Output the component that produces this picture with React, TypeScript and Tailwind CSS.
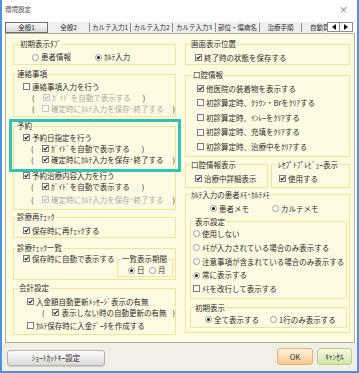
import React from 'react';

type Kids = { children?: React.ReactNode };

function Box({ on, dim }: { on?: boolean; dim?: boolean }) {
  return (
    <span
      className={`flex items-center justify-center w-[7px] h-[7px] shrink-0 border bg-white ${
        dim ? 'border-[#c6c6c6]' : 'border-[#7d7d7d]'
      }`}
    >
      {on && (
        <svg viewBox="0 0 5 5" className="w-[5px] h-[5px]">
          <path d="M0.6 2.4 L2 3.9 L4.5 0.9" fill="none" stroke={dim ? '#b4b4b4' : '#1c1c1c'} strokeWidth="1.1" />
        </svg>
      )}
    </span>
  );
}

function Dot({ on }: { on?: boolean }) {
  return (
    <span className="flex items-center justify-center w-[7px] h-[7px] shrink-0 rounded-full border border-[#9c9c9c] bg-white">
      {on && <span className="w-[3px] h-[3px] rounded-full bg-[#1c1c1c]" />}
    </span>
  );
}

function Group({
  title,
  lg = 'ml-[2px]',
  className = '',
  inner = '',
  children,
}: Kids & { title: string; lg?: string; className?: string; inner?: string }) {
  return (
    <fieldset className={`min-w-0 border border-[#f3e597] ${className}`}>
      <legend className={`px-[1px] text-[7.5px] leading-[10px] ${lg}`}>{title}</legend>
      <div className={inner}>{children}</div>
    </fieldset>
  );
}

function Chk({ on, dim, label, h = 'h-[11px]', className = '' }: { on?: boolean; dim?: boolean; label: string; h?: string; className?: string }) {
  return (
    <div className={`flex items-center gap-[2px] ${h} ${dim ? 'text-[#a8a8a8]' : ''} ${className}`}>
      <Box on={on} dim={dim} />
      <span className="whitespace-nowrap">{label}</span>
    </div>
  );
}

function Sub({ on, dim, label, gap = 'ml-[10px]', className = '' }: { on?: boolean; dim?: boolean; label: string; gap?: string; className?: string }) {
  return (
    <div className={`flex items-center h-[11px] ${className}`}>
      <span className="w-[11px]">(</span>
      <Box on={on} dim={dim} />
      <span className={`ml-[2px] whitespace-nowrap ${dim ? 'text-[#a8a8a8]' : ''}`}>{label}</span>
      <span className={gap}>)</span>
    </div>
  );
}

function Opt({ on, label, h = 'h-[10px]', w = '' }: { on?: boolean; label: string; h?: string; w?: string }) {
  return (
    <div className={`flex items-center gap-[2px] ${h}`}>
      <Dot on={on} />
      <span className={`whitespace-nowrap ${w}`}>{label}</span>
    </div>
  );
}

const tabs = [
  { t: '全般2', w: 'w-[42px]' },
  { t: 'カルテ入力1', w: 'w-[41px]' },
  { t: 'カルテ入力2', w: 'w-[42px]' },
  { t: 'カルテ入力3', w: 'w-[43px]' },
  { t: '部位・傷病名', w: 'w-[44px]' },
  { t: '治療手順', w: 'w-[42px]' },
];

export default function App() {
  return (
    <div className="w-[359px] h-[373px] flex flex-col overflow-hidden border-x-2 border-b-2 border-[#4f93de] bg-white text-[#2b2b2b] text-[7.5px] leading-none font-['Noto_Sans_CJK_JP','Noto_Sans',sans-serif]">
      {/* title bar */}
      <div className="h-[18px] shrink-0 flex items-center justify-between pl-[3px] pr-[9px] text-[6.5px] text-[#444]">
        <span>環境設定</span>
        <span className="text-[9px] text-[#666]">×</span>
      </div>

      {/* tabs */}
      <div className="h-[15px] shrink-0 flex items-end pl-[3px] pr-[2px]">
        <div className="flex-1 flex h-[11px] overflow-hidden bg-[#efefef] text-[6.5px]">
          <div className="w-[43px] shrink-0 flex items-center justify-center border border-[#6d6d6d] bg-linear-to-b from-[#fbfbfb] to-[#d9d9d9]">全般1</div>
          {tabs.map((tab) => (
            <div key={tab.t} className={`${tab.w} shrink-0 flex items-center justify-center border-r border-[#8c8c8c] my-[1px]`}>
              {tab.t}
            </div>
          ))}
          <div className="w-[42px] shrink-0 flex items-center pl-[8px] whitespace-nowrap">自動算定</div>
        </div>
        <div className="flex h-[10px] mb-[1px] mr-[2px]">
          <span className="w-[13px] flex items-center justify-center border border-[#8c8c8c] bg-white">
            <svg viewBox="0 0 4 6" className="w-[4px] h-[6px]"><path d="M4 0 L0 3 L4 6Z" fill="#111" /></svg>
          </span>
          <span className="w-[13px] flex items-center justify-center border border-l-0 border-[#8c8c8c] bg-white">
            <svg viewBox="0 0 4 6" className="w-[4px] h-[6px]"><path d="M0 0 L4 3 L0 6Z" fill="#111" /></svg>
          </span>
        </div>
      </div>

      {/* main panel */}
      <div className="ml-[3px] w-[350px] shrink-0 flex items-start gap-[9px] border border-[#b6b09a] bg-[#fffbe2] pt-[5px] pl-[7px] pb-[7px]">
        {/* left column */}
        <div className="relative w-[163px] flex flex-col">
          <Group title="初期表示ﾀﾌﾞ" lg="ml-[5px]" inner="pt-[3px] pb-[2px] pl-[18px]">
            <div className="flex items-center h-[10px]">
              <Opt label="患者情報" w="w-[54px]" />
              <Opt on label="ｶﾙﾃ入力" />
            </div>
          </Group>

          <Group title="連絡事項" className="mt-[4px]" inner="pt-[2px] pb-[2px] pl-[9px]">
            <Chk label="連絡事項入力を行う" />
            <Sub on dim label="ｶﾞｲﾄﾞを自動で表示する" gap="ml-[12px]" className="ml-[9px]" />
            <Sub dim label="確定時にｶﾙﾃ入力を保存･終了する" gap="ml-[9px]" className="ml-[9px]" />
          </Group>

          <Group title="予約" className="mt-[4px]" inner="pt-[1px] pb-[4px] pl-[9px]">
            <Chk on label="予約日指定を行う" />
            <Sub on label="ｶﾞｲﾄﾞを自動で表示する" gap="ml-[12px]" className="ml-[8px]" />
            <Sub on label="確定時にｶﾙﾃ入力を保存･終了する" gap="ml-[9px]" className="ml-[8px]" />
            <Chk on label="予約治療内容入力を行う" className="mt-[5px]" />
            <Sub on label="ｶﾞｲﾄﾞを自動で表示する" gap="ml-[12px]" className="ml-[8px]" />
            <Sub on dim label="確定時にｶﾙﾃ入力を保存･終了する" gap="ml-[9px]" className="ml-[8px] mt-[2px]" />
          </Group>

          <Group title="診療再ﾁｪｯｸ" className="mt-[2px]" inner="pt-[3px] pb-[1px] pl-[9px]">
            <Chk on label="保存時に再ﾁｪｯｸする" />
          </Group>

          <Group title="診療ﾁｪｯｸ一覧" className="mt-[5px]" inner="pb-[2px] pl-[9px] pr-[2px] flex items-start justify-between">
            <Chk on label="保存時に自動で表示する" />
            <Group title="一覧表示期間" lg="ml-[3px]" className="w-[56px] mt-[1px]" inner="pt-[1px] pb-[1px] pl-[10px] flex items-center">
              <Opt on label="日" w="w-[12px]" />
              <Opt label="月" />
            </Group>
          </Group>

          <Group title="会計設定" lg="ml-[4px]" className="mt-[3px]" inner="pt-[3px] pb-[3px] pl-[13px]">
            <Chk on label="入金額自動更新ﾒｯｾｰｼﾞ表示の有無" />
            <Sub on label="表示しない時の自動更新の有無" gap="ml-[6px]" className="ml-[15px]" />
            <Chk label="ｶﾙﾃ保存時に入金ﾃﾞｰﾀを作成する" className="mt-[2px]" />
          </Group>

          {/* highlight frame */}
          <div className="absolute top-[80px] -left-[4px] w-[172px] h-[53px] border-[3px] border-[#31c2b5] pointer-events-none" />
        </div>

        {/* right column */}
        <div className="w-[165px] flex flex-col">
          <Group title="画面表示位置" lg="ml-[4px]" inner="pt-[3px] pb-[1px] pl-[9px]">
            <Chk on label="終了時の状態を保存する" />
          </Group>

          <Group title="口腔情報" lg="ml-[6px]" className="mt-[5px]" inner="pt-[1px] pb-[2px] pl-[11px]">
            <Chk on h="h-[14.6px]" label="他医院の装着物を表示する" />
            <Chk h="h-[14.6px]" label="初診算定時、ｸﾗｳﾝ・Brをｸﾘｱする" />
            <Chk h="h-[14.6px]" label="初診算定時、ｲﾝﾚｰをｸﾘｱする" />
            <Chk h="h-[14.6px]" label="初診算定時、充填をｸﾘｱする" />
            <Chk h="h-[14.6px]" label="初診算定時、治療中をｸﾘｱする" />
          </Group>

          <div className="flex gap-[3px] mt-[3px]">
            <Group title="口腔情報表示" lg="ml-[4px]" className="w-[83px]" inner="pt-[3px] pb-[3px] pl-[9px]">
              <Chk on label="治療中詳細表示" />
            </Group>
            <Group title="ﾚｾﾌﾟﾄﾌﾟﾚﾋﾞｭｰ表示" lg="ml-[5px]" className="w-[79px]" inner="pt-[3px] pb-[3px] pl-[7px]">
              <Chk on label="使用する" />
            </Group>
          </div>

          <Group title="ｶﾙﾃ入力の患者ﾒﾓ･ｶﾙﾃﾒﾓ" lg="ml-[4px]" className="mt-[2px]" inner="pt-[4px] pb-[4px] pl-[4px] pr-[2px]">
            <div className="flex items-center h-[10px] pl-[20px]">
              <Opt on label="患者メモ" w="w-[53px]" />
              <Opt label="カルテメモ" />
            </div>
            <Group title="表示設定" lg="ml-[3px]" className="mt-[3px]" inner="pb-[2px] pl-[2px]">
              <Opt h="h-[13.75px]" label="使用しない" />
              <Opt h="h-[13.75px]" label="ﾒﾓが入力されている場合のみ表示する" />
              <Opt h="h-[13.75px]" label="注意事項が含まれている場合のみ表示する" />
              <Opt on h="h-[13.75px]" label="常に表示する" />
              <Chk h="h-[13.75px]" label="ﾒﾓを改行して表示する" />
            </Group>
            <Group title="初期表示" lg="ml-[3px]" className="mt-[4px]" inner="pt-[2px] pb-[2px] pl-[14px]">
              <div className="flex items-center h-[10px]">
                <Opt on label="全て表示する" w="w-[56px]" />
                <Opt label="1行のみ表示する" />
              </div>
            </Group>
          </Group>
        </div>
      </div>

      {/* bottom buttons */}
      <div className="flex-1 flex items-start justify-between bg-[#f1efe8] pl-[5px] pr-[5px]">
        <button className="mt-[7px] w-[98px] h-[16px] rounded-[3px] border border-[#b3b3b3] bg-linear-to-b from-[#fdfdfd] to-[#d8d8d8] text-[7.5px] text-[#333] shadow-[0_1px_1px_rgba(0,0,0,0.15)]">
          ｼｮｰﾄｶｯﾄｷｰ設定
        </button>
        <div className="mt-[5px] flex gap-[4px]">
          <button className="w-[36px] h-[17px] rounded-[3px] border border-[#e2b577] bg-linear-to-b from-[#fff3df] to-[#f7c68c] text-[7.5px] text-[#333]">
            OK
          </button>
          <button className="w-[35px] h-[17px] rounded-[3px] border border-[#b9d08c] bg-linear-to-b from-[#f5fae6] to-[#d2e6a6] text-[7.5px] text-[#333]">
            ｷｬﾝｾﾙ
          </button>
        </div>
      </div>
    </div>
  );
}
